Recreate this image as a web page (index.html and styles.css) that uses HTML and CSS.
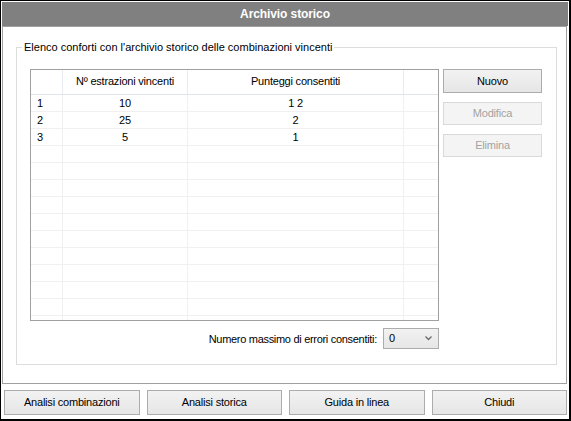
FILE: index.html
```html
<!DOCTYPE html>
<html>
<head>
<meta charset="utf-8">
<link rel="stylesheet" href="styles.css">
</head>
<body>
<div class="window">
  <div class="titlebar">Archivio storico</div>
  <div class="panel">
    <div class="group">
      <div class="legend">Elenco conforti con l'archivio storico delle combinazioni vincenti</div>
      <div class="main">
        <div class="grid">
          <div class="row head">
            <div class="cell"></div>
            <div class="cell center">Nº estrazioni vincenti</div>
            <div class="cell center">Punteggi consentiti</div>
            <div class="cell"></div>
          </div>
          <div class="row"><div class="cell num">1</div><div class="cell center">10</div><div class="cell center">1 2</div><div class="cell"></div></div>
          <div class="row"><div class="cell num">2</div><div class="cell center">25</div><div class="cell center">2</div><div class="cell"></div></div>
          <div class="row"><div class="cell num">3</div><div class="cell center">5</div><div class="cell center">1</div><div class="cell"></div></div>
          <div class="row"><div class="cell"></div><div class="cell"></div><div class="cell"></div><div class="cell"></div></div>
          <div class="row"><div class="cell"></div><div class="cell"></div><div class="cell"></div><div class="cell"></div></div>
          <div class="row"><div class="cell"></div><div class="cell"></div><div class="cell"></div><div class="cell"></div></div>
          <div class="row"><div class="cell"></div><div class="cell"></div><div class="cell"></div><div class="cell"></div></div>
          <div class="row"><div class="cell"></div><div class="cell"></div><div class="cell"></div><div class="cell"></div></div>
          <div class="row"><div class="cell"></div><div class="cell"></div><div class="cell"></div><div class="cell"></div></div>
          <div class="row"><div class="cell"></div><div class="cell"></div><div class="cell"></div><div class="cell"></div></div>
          <div class="row"><div class="cell"></div><div class="cell"></div><div class="cell"></div><div class="cell"></div></div>
          <div class="row"><div class="cell"></div><div class="cell"></div><div class="cell"></div><div class="cell"></div></div>
          <div class="row"><div class="cell"></div><div class="cell"></div><div class="cell"></div><div class="cell"></div></div>
          <div class="row"><div class="cell"></div><div class="cell"></div><div class="cell"></div><div class="cell"></div></div>
        </div>
        <div class="side">
          <div class="btn">Nuovo</div>
          <div class="btn disabled">Modifica</div>
          <div class="btn disabled">Elimina</div>
        </div>
      </div>
      <div class="errors">
        <span class="errlabel">Numero massimo di errori consentiti:</span>
        <div class="combo">
          <span>0</span>
          <svg class="chev" width="7" height="5" viewBox="0 0 7 5"><path d="M0.5 0.5 L3.5 3.5 L6.5 0.5" fill="none" stroke="#6e6e6e" stroke-width="1.4"/></svg>
        </div>
      </div>
    </div>
  </div>
  <div class="footer">
    <div class="btn big">Analisi combinazioni</div>
    <div class="btn big">Analisi storica</div>
    <div class="btn big">Guida in linea</div>
    <div class="btn big">Chiudi</div>
  </div>
</div>
</body>
</html>
```
FILE: styles.css
```css
* { box-sizing: border-box; }
html, body { margin: 0; padding: 0; background: #ffffff; }
body {
  font-family: "Liberation Sans", Arial, sans-serif;
  font-size: 11px;
  letter-spacing: -0.2px;
  color: #000;
}
.window {
  width: 571px;
  height: 421px;
  border-top: 1px solid #000;
  border-left: 1px solid #000;
  border-right: 2px solid #000;
  border-bottom: 2px solid #000;
  padding: 1px 1px 1px 1px;
  background: #fff;
  display: flex;
  flex-direction: column;
}
.titlebar {
  height: 24px;
  background: #808080;
  color: #fff;
  font-weight: bold;
  font-size: 12px;
  letter-spacing: -0.1px;
  display: flex;
  align-items: center;
  justify-content: center;
  padding-bottom: 1px;
}
.panel {
  height: 358px;
  margin-right: 1px;
  border: 1px solid #a0a0a0;
  padding: 20px 9px 18px 13px;
  display: flex;
}
.group {
  flex: 1;
  border: 1px solid #dcdcdc;
  position: relative;
  padding: 21px 14px 0 13px;
  display: flex;
  flex-direction: column;
}
.legend {
  position: absolute;
  left: 5px;
  top: -8px;
  background: #fff;
  padding: 0 2px;
  line-height: 14px;
  letter-spacing: 0;
}
.main {
  display: flex;
  gap: 4px;
}
.grid {
  width: 409px;
  height: 252px;
  border: 1px solid #a0a0a0;
  overflow: hidden;
  display: flex;
  flex-direction: column;
}
.row {
  display: grid;
  grid-template-columns: 32px 125px 216px 1fr;
  height: 17px;
  flex: none;
  border-bottom: 1px solid #f0f0f0;
}
.row.head {
  height: 25px;
  border-bottom: 1px solid #dde4ec;
}
.cell {
  border-right: 1px solid #f0f0f0;
  display: flex;
  align-items: center;
  padding-bottom: 1px;
}
.row.head .cell { border-right-color: #e8ecf0; padding-bottom: 2px; }
.cell:last-child { border-right: none; }
.cell.center { justify-content: center; }
.cell.num { padding-left: 6px; }
.side {
  display: flex;
  flex-direction: column;
  gap: 9px;
}
.btn {
  border: 1px solid #acacac;
  background: linear-gradient(#f2f2f2, #e6e6e6);
  display: flex;
  align-items: center;
  justify-content: center;
  padding-bottom: 1px;
}
.side .btn {
  width: 99px;
  height: 24px;
}
.side .btn + .btn { height: 23px; }
.btn.disabled {
  border-color: #d9d9d9;
  background: #f4f4f4;
  color: #a3a3a3;
}
.errors {
  width: 409px;
  margin-top: 7px;
  display: flex;
  justify-content: flex-end;
  align-items: center;
  gap: 6px;
}
.errlabel { letter-spacing: -0.3px; }
.combo {
  width: 56px;
  height: 21px;
  border: 1px solid #acacac;
  background: linear-gradient(#f2f2f2, #e6e6e6);
  display: flex;
  align-items: center;
  justify-content: space-between;
  padding: 0 6px 1px 5px;
}
.chev { display: block; }
.footer {
  display: flex;
  gap: 7px;
  padding: 6px 0 0 2px;
  margin-right: 1px;
}
.btn.big {
  flex: 1;
  height: 25px;
}
```
